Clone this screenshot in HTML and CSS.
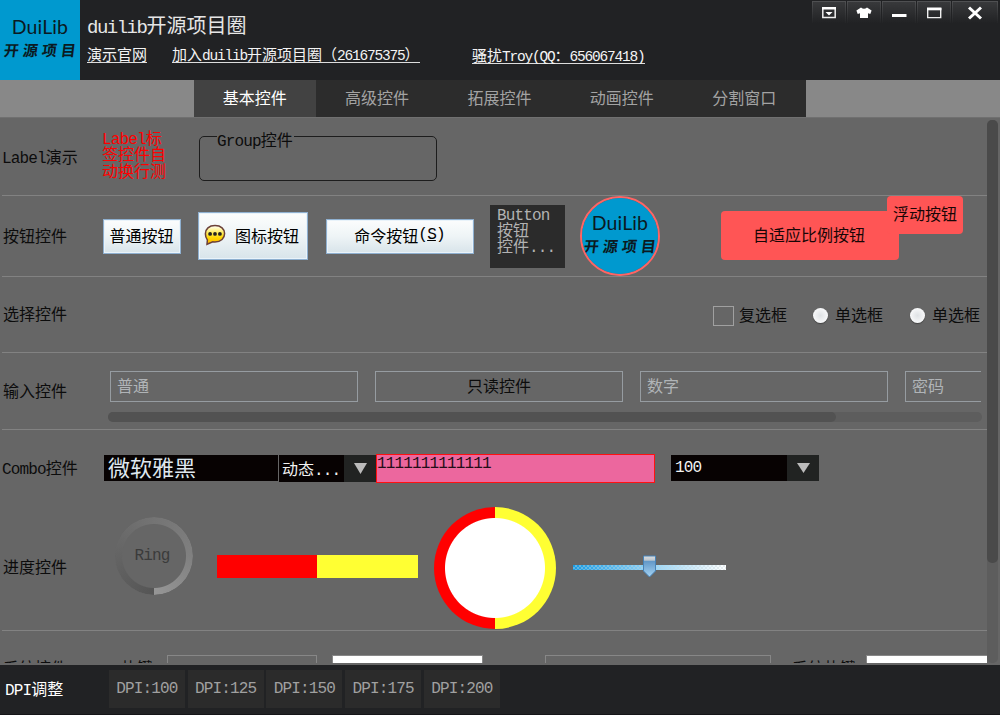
FILE: index.html
```html
<!DOCTYPE html>
<html lang="zh-CN">
<head>
<meta charset="utf-8">
<title>duilib开源项目圈</title>
<link rel="stylesheet" href="styles.css">
</head>
<body>
<div class="window">
  <header class="header">
    <div class="logo"><span class="logo-en">DuiLib</span><span class="logo-cn">开源项目</span></div>
    <div class="heading">
      <h1 class="title"><span class="lat">duilib</span>开源项目圈</h1>
      <nav class="links">
        <a class="link">演示官网</a>
        <a class="link join">加入<span class="lat">duilib</span>开源项目圈（<span class="lat">261675375</span>）</a>
        <a class="link qq">骚扰<span class="lat">Troy(QQ</span>：<span class="lat">656067418)</span></a>
      </nav>
    </div>
    <div class="sys">
      <div class="sys-btn"><svg width="16" height="14" viewBox="0 0 16 14"><path d="M1.8 2v9.6h12.4V2" fill="none" stroke="#eee" stroke-width="1.5"/><path d="M1 1h14v2.6H1zM4.5 6h7L8 9.6z" fill="#fff"/></svg></div>
      <div class="sys-btn"><svg width="16" height="14" viewBox="0 0 16 14"><path d="M5 1.5Q8 4 11 1.5L15.6 4.5 14.3 8 12 7.2V12H4V7.2L1.700 8 .4 4.500z" fill="#fff"/></svg></div>
      <div class="sys-btn"><svg width="16" height="14" viewBox="0 0 16 14"><path d="M1 8h14.500v3H1z" fill="#fff"/></svg></div>
      <div class="sys-btn"><svg width="16" height="14" viewBox="0 0 16 14"><path d="M1.700 2v9.600h13V2" fill="none" stroke="#eee" stroke-width="1.400"/><path d="M1 1.500h14.400v2.800H1z" fill="#fff"/></svg></div>
      <div class="sys-btn close"><svg width="16" height="14" viewBox="0 0 16 14"><path d="M2 1.500 14 12.500M14 1.500 2 12.500" stroke="#fff" stroke-width="3"/></svg></div>
    </div>
  </header>

  <nav class="tabs">
    <div class="tab active">基本控件</div>
    <div class="tab">高级控件</div>
    <div class="tab">拓展控件</div>
    <div class="tab">动画控件</div>
    <div class="tab">分割窗口</div>
  </nav>

  <main class="body">
    <div class="content">
      <section class="row row-label">
        <div class="name"><span class="lat">Label</span>演示</div>
        <div class="wrap-label"><span class="lat">Label</span>标<br>签控件自<br>动换行测</div>
        <div class="group"><span class="legend"><span class="lat">Group</span>控件</span></div>
      </section>

      <section class="row row-button">
        <div class="name">按钮控件</div>
        <div class="btn plain">普通按钮</div>
        <div class="btn icon">
          <svg width="22" height="22" viewBox="0 0 22 22"><defs><linearGradient id="g" x1="0" y1="0" x2="0" y2="1"><stop offset="0" stop-color="#fff"/><stop offset=".35" stop-color="#ffee66"/><stop offset=".65" stop-color="#ffd800"/><stop offset="1" stop-color="#ffae00"/></linearGradient></defs><path d="M11 1.600C5 1.600 1.400 5 1.400 9.700c0 3 .8 4.800 2 6.200L3 20.300l5.800-2.600c.7.200 1.400.2 2.200.2 6 0 9.600-3.600 9.600-8.300S17 1.600 11 1.600z" fill="url(#g)" stroke="#6b4038" stroke-width="1.500"/><g fill="#222"><circle cx="6.100" cy="9.900" r="1.900"/><circle cx="11" cy="9.900" r="1.900"/><circle cx="15.900" cy="9.900" r="1.900"/></g></svg>
          图标按钮</div>
        <div class="btn command">命令按钮<span class="lat">(<u>S</u>)</span></div>
        <div class="dark"><span class="lat">Button</span><br>按钮<br>控件<span class="lat">...</span></div>
        <div class="badge"><div class="logo"><span class="logo-en">DuiLib</span><span class="logo-cn">开源项目</span></div></div>
        <div class="ratio">自适应比例按钮<div class="float">浮动按钮</div></div>
      </section>

      <section class="row row-option">
        <div class="name">选择控件</div>
        <div class="options">
          <div class="option"><i class="check"></i>复选框</div>
          <div class="option"><i class="radio"></i>单选框</div>
          <div class="option"><i class="radio"></i>单选框</div>
        </div>
      </section>

      <section class="row row-edit">
        <div class="name">输入控件</div>
        <div class="edits">
          <div class="edit-list">
            <div class="edit">普通</div>
            <div class="edit readonly">只读控件</div>
            <div class="edit">数字</div>
            <div class="edit">密码</div>
          </div>
          <div class="hscroll"><div class="hthumb"></div></div>
        </div>
      </section>

      <section class="row row-combo">
        <div class="name"><span class="lat">Combo</span>控件</div>
        <div class="font-box">微软雅黑</div>
        <div class="combo dynamic"><span>动态<span class="lat">...</span></span><div class="arrow"><svg width="13" height="11"><path d="M0 0h13L6.500 11z" fill="#bbb"/></svg></div></div>
        <div class="rich"><span class="lat">1111111111111</span></div>
        <div class="combo number"><span class="lat">100</span><div class="arrow"><svg width="13" height="10"><path d="M0 0h13L6.500 10z" fill="#bbb"/></svg></div></div>
      </section>

      <section class="row row-progress">
        <div class="name">进度控件</div>
        <div class="ring"><span class="lat">Ring</span></div>
        <div class="bar"></div>
        <div class="pie"></div>
        <svg class="slider" width="154" height="24" viewBox="0 0 154 24">
          <defs>
            <linearGradient id="track"><stop offset="0" stop-color="#189ce4"/><stop offset=".5" stop-color="#90d2f6"/><stop offset="1" stop-color="#fff"/></linearGradient>
            <linearGradient id="thumb" x1="0" y1="0" x2="0" y2="1"><stop offset="0" stop-color="#ddd"/><stop offset=".2" stop-color="#bbc6d0"/><stop offset=".25" stop-color="#6298c8"/><stop offset="1" stop-color="#a6d4f4"/></linearGradient>
            <pattern id="dots" width="4" height="4" patternUnits="userSpaceOnUse"><path d="M0 0h2v2H0zM2 2h2v2H2z" fill="#c4d4dc" fill-opacity=".4"/></pattern>
          </defs>
          <path d="M0 10h153v5H0z" fill="url(#track)"/><path d="M0 10h153v5H0z" fill="url(#dots)"/>
          <path d="M70.500 1h12v15l-6 6-6-6z" fill="url(#thumb)" stroke="#4783b8"/>
        </svg>
      </section>

      <section class="row row-system">
        <div class="name">系统控件</div>
        <div class="cut c1">热键</div><div class="field f1"></div>
        <div class="field white f2"></div>
        <div class="cut c3"><span class="lat">IP</span></div><div class="field f3"></div>
        <div class="cut c4">系统热键</div><div class="field white f4"></div>
      </section>
    </div>
    <div class="vscroll"><div class="vthumb"></div></div>
  </main>

  <footer class="footer">
    <div class="dpi-name"><span class="lat">DPI</span>调整</div>
    <div class="dpi lat">DPI:100</div>
    <div class="dpi lat">DPI:125</div>
    <div class="dpi lat">DPI:150</div>
    <div class="dpi lat">DPI:175</div>
    <div class="dpi lat">DPI:200</div>
  </footer>
</div>
</body>
</html>
```

FILE: styles.css
```css
* { box-sizing: border-box; }
body {
  margin: 0;
  font: 16px/20px "Noto Sans CJK SC", sans-serif;
  color: #0c0c0c;
}
h1 { margin: 0; font-weight: normal; }
.window { width: 1000px; height: 715px; display: flex; flex-direction: column; background: #666; overflow: hidden; white-space: nowrap; }
.lat { font-family: "Liberation Mono", monospace; font-size: 16px; letter-spacing: -.85px; line-height: 0; }

/* header */
.header { height: 80px; flex: none; display: flex; background: #212224; color: #e6e6e6; }
.logo { width: 80px; height: 80px; flex: none; background: #0099cf; color: #0b1a22; display: flex; flex-direction: column; align-items: center; padding-top: 16px; }
.logo-en { font: 19.5px/22px Lato, sans-serif; letter-spacing: .1px; }
.logo-cn { font-size: 15px; line-height: 20px; margin-top: 2px; font-weight: bold; letter-spacing: 4px; margin-right: -4px; transform: skewX(-7deg); }
.heading { width: 732px; padding-left: 7px; }
.title { font-size: 20px; line-height: 26px; margin-top: 12px; }
.title .lat { font-size: 19px; letter-spacing: -1.500px; }
.links { display: flex; margin-top: 9px; font-size: 15px; line-height: 16px; color: #f4f4f4; }
.link { border-bottom: 1px solid #ddd; height: 16px; line-height: 14px; }
.link .lat { font-size: 14.500px; letter-spacing: -1.200px; }
.join { margin-left: 25px; width: 248px; }
.qq { margin: 1px 0 0 52px; }
.sys { display: flex; margin-top: 1px; gap: 1px; }
.sys-btn { width: 34px; height: 22px; padding-top: 4px; text-align: center; line-height: 0; border: solid #48494b; border-width: 1px 1px 0; border-image: linear-gradient(#505153, #212224) 1; background: linear-gradient(#38393b, #212224); }
.close { width: 46px; }

/* tabs */
.tabs { height: 38px; flex: none; display: flex; padding-left: 194px; background: #888; border-bottom: 1px solid #707070; }
.tab { width: 122.400px; padding: 7px 1px 0 0; text-align: center; background: #2c2c2c; color: #a3a3a3; }
.active { background: #424242; color: #fff; }

/* scrolling page */
.body { height: 545px; flex: none; display: flex; overflow: hidden; }
.content { width: 987px; padding-left: 2px; }
.row { height: 77px; display: flex; align-items: flex-start; border-bottom: 1px solid #828282; }
.name { width: 101px; flex: none; align-self: center; padding-left: 1px; margin-top: -3px; }
.row-label { height: 78px; }
.row-label .name, .row-combo .name { padding-left: 0; margin-top: -2px; }
.wrap-label { width: 70px; margin: 11px 0 0 -1px; line-height: 16.300px; color: #f00; }
.group { width: 238px; height: 45px; margin: 18px 0 0 27px; border: 1.500px solid #1d1d1d; border-radius: 5px; }
.legend { display: block; width: 77px; margin: -8px 0 0 17px; background: #666; line-height: 20px; }

.row-button { height: 81px; align-items: center; }
.btn { height: 35px; display: flex; align-items: center; justify-content: center; padding: 0 1px 3px 0; color: #000; background: linear-gradient(#fcfdfd, #eef4f6 50%, #d8e4ea); border: 1px solid #8fb0d0; box-shadow: inset 0 0 0 1px #e9f3fa; }
.plain { width: 78px; }
.icon { width: 110px; height: 48px; margin-left: 17px; gap: 9px; padding-right: 3px; }
.command { width: 148px; margin-left: 18px; }
.dark { width: 75px; height: 63px; margin-left: 16px; padding: 0 0 0 7px; background: #2b2b2b; color: #b2b2b2; line-height: 16px; }
.badge { width: 80px; height: 80px; flex: none; margin-left: 15px; border-radius: 50%; overflow: hidden; border: 2px solid #ff6464; }
.badge .logo { margin: -2px; }
.ratio { position: relative; width: 178px; height: 49px; margin: -1px 0 0 61px; border-radius: 4px; background: #ff5555; line-height: 47px; padding-right: 2px; text-align: center; color: #180606; }
.float { position: absolute; left: 166px; top: -15px; width: 76px; height: 38px; line-height: 35px; border-radius: 4px; background: #ff5555; }

.row-option { height: 76px; align-items: center; }
.options { display: flex; margin: -2px 0 0 609px; }
.option { display: flex; align-items: center; width: 97px; height: 20px; }
.option + .option { padding-top: 1px; }
.check { width: 21px; height: 20px; margin: 4px 5px 0 1px; border: 1px solid #a0a0a0; flex: none; }
.radio { width: 15px; height: 15px; margin: 3px 7px 0 4px; flex: none; border-radius: 50%; background: radial-gradient(#dfe2e5, #f6f7f8 65%); box-shadow: 0 1px 1px #444; }

.edits { width: 877px; padding: 18px 0 0 5px; }
.edit-list { display: flex; gap: 17px; width: 873px; overflow: hidden; padding-left: 2px; }
.edit { width: 248px; height: 31px; flex: none; border: 1px solid #969ca1; padding: 3px 6px; color: #b0b4b7; }
.readonly { text-align: center; color: #0c0c0c; }
.hscroll { width: 874px; height: 10px; margin-top: 10px; border-radius: 5px; background: #5d5d5d; }
.hthumb { width: 728px; height: 10px; border-radius: 5px; background: #525252; }

.row-combo { height: 75px; border: 0; }
.font-box { width: 174px; height: 26px; margin: 25px 0 0 1px; padding-left: 4px; background: #070202; color: #dfe8ef; font-size: 22px; line-height: 22px; }
.combo { display: flex; height: 27px; justify-content: space-between; background: #070202; color: #f2f2f2; }
.arrow { width: 32px; background: #212322; display: flex; justify-content: center; align-items: center; }
.dynamic { width: 97px; margin: 25px 0 0 1px; padding-left: 3px; line-height: 26px; }
.rich { width: 279px; height: 29px; margin: 24px 0 0; background: #ec679e; border: 1px solid #f11; line-height: 13px; color: #240d18; }
.number { width: 148px; height: 26px; margin: 25px 0 0 16px; padding-left: 4px; }
.number > .lat { line-height: 27px; }

.row-progress { height: 126px; }
.ring { position: relative; width: 78px; height: 78px; margin: 12px 0 0 12px; padding-right: 4px; line-height: 73px; text-align: center; color: #3b3b3b; }
.ring::before { content: ""; position: absolute; inset: 0; border-radius: 50%; background: conic-gradient(from 180deg, #555, #646464 25%, #747474 50%, #808080 75%, #969696); -webkit-mask: radial-gradient(circle, transparent 31.500px, #000 32.500px); mask: radial-gradient(circle, transparent 31.500px, #000 32.500px); }
.bar { width: 201px; height: 23px; margin: 50px 0 0 24px; background: linear-gradient(90deg, #f00 50%, #ff3 50%); }
.pie { width: 122px; height: 122px; margin: 2px 0 0 16px; border-radius: 50%; background: radial-gradient(circle, #fff 49.500px, transparent 50.500px), linear-gradient(90deg, #f00 50%, #ff3 50%); }
.slider { margin: 50px 0 0 17px; }

.row-system { border: 0; height: 32px; overflow: hidden; }
.row-system .name, .cut { align-self: flex-start; margin-top: 26px; height: 20px; }
.row-system .name { width: 119px; }
.cut { flex: none; }
.field { flex: none; height: 20px; margin-top: 24px; border: 1px solid #878787; }
.white { background: #fff; }
.c1 { width: 46px; }
.f1 { width: 150px; }
.f2 { width: 151px; margin-left: 15px; }
.c3 { width: 30px; margin-left: 31px; }
.f3 { width: 226px; margin-left: 1px; }
.c4 { width: 74px; margin-left: 21px; }
.f4 { width: 123px; }
.vscroll { width: 11px; margin-top: 2px; height: 543px; border-radius: 5px; background: #5d5d5d; }
.vthumb { width: 11px; height: 443px; border-radius: 5px; background: #4a4a4a; }

/* footer */
.footer { height: 50px; margin-top: 2px; flex: none; display: flex; align-items: center; gap: 2.800px; background: #212224; border-bottom: 1px solid #151518; padding: 0 0 1px 5px; }
.dpi-name { width: 101px; color: #fff; margin-top: -2px; }
.dpi { width: 76px; height: 38px; line-height: 39px; background: #2b2b2b; color: #a0a0a0; text-align: center; }
```
